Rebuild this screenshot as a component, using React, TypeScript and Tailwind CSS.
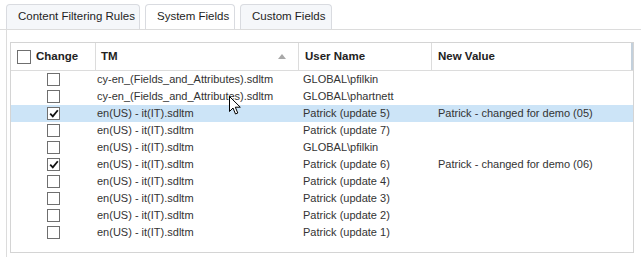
// Record grid with tab strip — System Fields view
import React from 'react';

interface Row {
  checked: boolean;
  tm: string;
  user: string;
  value: string;
  selected?: boolean;
}

const ROWS: Row[] = [
  { checked: false, tm: 'cy-en_(Fields_and_Attributes).sdltm', user: 'GLOBAL\\pfilkin', value: '' },
  { checked: false, tm: 'cy-en_(Fields_and_Attributes).sdltm', user: 'GLOBAL\\phartnett', value: '' },
  { checked: true, tm: 'en(US) - it(IT).sdltm', user: 'Patrick (update 5)', value: 'Patrick - changed for demo (05)', selected: true },
  { checked: false, tm: 'en(US) - it(IT).sdltm', user: 'Patrick (update 7)', value: '' },
  { checked: false, tm: 'en(US) - it(IT).sdltm', user: 'GLOBAL\\pfilkin', value: '' },
  { checked: true, tm: 'en(US) - it(IT).sdltm', user: 'Patrick (update 6)', value: 'Patrick - changed for demo (06)' },
  { checked: false, tm: 'en(US) - it(IT).sdltm', user: 'Patrick (update 4)', value: '' },
  { checked: false, tm: 'en(US) - it(IT).sdltm', user: 'Patrick (update 3)', value: '' },
  { checked: false, tm: 'en(US) - it(IT).sdltm', user: 'Patrick (update 2)', value: '' },
  { checked: false, tm: 'en(US) - it(IT).sdltm', user: 'Patrick (update 1)', value: '' },
];

const TABS = [
  { label: 'Content Filtering Rules', active: false, w: 'w-[134px]' },
  { label: 'System Fields', active: true, w: 'w-[90px]' },
  { label: 'Custom Fields', active: false, w: 'w-[92px]' },
];

function CheckBox({ checked, size }: { checked: boolean; size: string }) {
  return (
    <span className={`relative flex items-center justify-center border border-[#6f6f6f] bg-white ${size}`}>
      {checked && (
        <svg width="10" height="9" viewBox="0 0 10 9" className="absolute">
          <path d="M1.2 4.6 L3.8 7.4 L8.8 1.2" fill="none" stroke="#111" strokeWidth={1.8} />
        </svg>
      )}
    </span>
  );
}

export default function App() {
  return (
    <div className="w-[641px] h-[257px] bg-white overflow-hidden relative text-[11px] text-[#333]" style={{ fontFamily: '"Liberation Sans", Arial, sans-serif' }}>
      {/* tab strip */}
      <div className="flex gap-[5px] pl-[6px] pt-[4px] border-b border-[#dcdcdc] h-[30px]">
        {TABS.map(t => (
          <div
            key={t.label}
            className={`${t.w} h-[25px] flex items-center pl-[11px] whitespace-nowrap text-[11.5px] text-[#1e1e1e] border border-b-0 border-[#d9dbe0] rounded-t-[4px] ${t.active ? 'bg-white' : 'bg-[#f5f7fa]'}`}
          >
            {t.label}
          </div>
        ))}
      </div>

      {/* panel */}
      <div className="ml-[6px] border-l border-[#dcdcdc] h-[227px] pl-[3px] pt-[12px]">
        <div className="w-[624px] h-[211px] border border-[#d4d4d4]">
          {/* header */}
          <div className="grid grid-cols-[85px_203px_133px_1fr] h-[28px] border-b border-[#dcdcdc] font-bold text-[#222] text-[11.5px]">
            <div className="flex items-center gap-[5px] pl-[6px] border-r border-[#dcdcdc]">
              <CheckBox checked={false} size="w-[14px] h-[14px]" />
              <span>Change</span>
            </div>
            <div className="flex items-center justify-between pl-[5px] pr-[12px] border-r border-[#dcdcdc]">
              <span>TM</span>
              <svg width="8" height="5" viewBox="0 0 8 5">
                <path d="M0 5 L4 0 L8 5 Z" fill="#a8a8a8" />
              </svg>
            </div>
            <div className="flex items-center pl-[6px] border-r border-[#dcdcdc]">User Name</div>
            <div className="flex items-center pl-[6px] border-r-2 border-[#c3d0dc]">New Value</div>
          </div>

          {/* rows */}
          {ROWS.map((r, i) => (
            <div
              key={i}
              className={`grid grid-cols-[85px_203px_133px_1fr] h-[17px] items-center ${r.selected ? 'bg-[#cce4f7]' : ''}`}
            >
              <div className="flex justify-center">
                <CheckBox checked={r.checked} size="w-[13px] h-[13px]" />
              </div>
              <div className="pl-[1px]">{r.tm}</div>
              <div className="pl-[4px]">{r.user}</div>
              <div className="pl-[6px]">{r.value}</div>
            </div>
          ))}
        </div>
      </div>

      {/* mouse cursor */}
      <svg width="13" height="20" viewBox="0 0 13 20" className="absolute left-[229px] top-[96px]">
        <path d="M0.5 0.5 L0.5 15.5 L4 12 L6.5 18 L8.8 17 L6.3 11.2 L11.3 11.2 Z" fill="#fff" stroke="#000" strokeWidth={1} strokeLinejoin="round" />
      </svg>
    </div>
  );
}
